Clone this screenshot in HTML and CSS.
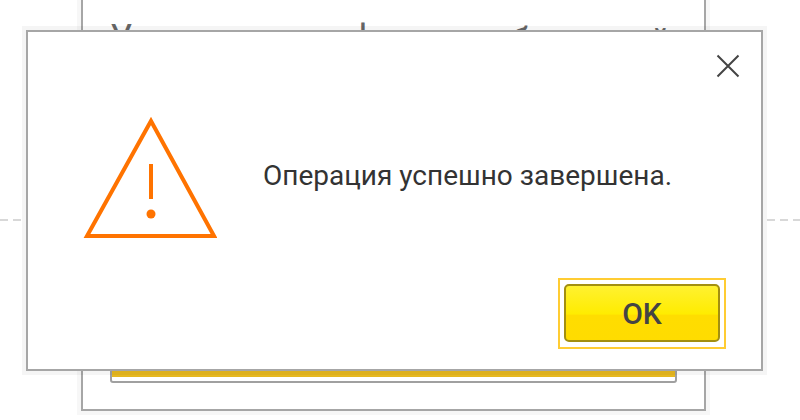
FILE: index.html
```
<!DOCTYPE html>
<html lang="ru">
<head>
    <meta charset="UTF-8">
    <meta name="viewport" content="width=device-width, initial-scale=1.0">
    <title>Сообщение</title>
    <link rel="stylesheet" href="styles.css">
</head>
<body>
    <div class="desktop">
        <div class="guide"></div>

        <div class="window">
            <div class="window-title" aria-hidden="true">
                <span>У</span>
                <span>ф</span>
                <span class="low">б</span>
                <span class="low">й</span>
            </div>
            <div class="window-field"></div>
        </div>

        <div class="dialog" role="alertdialog" aria-labelledby="message">
            <div class="dialog-top">
                <button type="button" class="close" aria-label="Закрыть">
                    <svg width="24" height="24" viewBox="0 0 24 24">
                        <path d="M1.5 1.5 22.5 22.5M22.5 1.5 1.5 22.5" fill="none" stroke="#444" stroke-width="2"/>
                    </svg>
                </button>
            </div>
            <div class="dialog-body">
                <svg class="warning" width="134" height="124" viewBox="0 0 134 124">
                    <path d="M68 5 131 120H4Z" fill="none" stroke="#ff7300" stroke-width="4"/>
                    <path d="M68 48V83" stroke="#ff7300" stroke-width="4"/>
                    <circle cx="68" cy="98" r="4.500" fill="#ff7300"/>
                </svg>
                <p id="message" class="message">Операция успешно завершена.</p>
            </div>
            <div class="dialog-actions">
                <div class="focus-ring">
                    <button type="button" class="ok">OK</button>
                </div>
            </div>
        </div>
    </div>
</body>
</html>
```
FILE: styles.css
```
* {
    box-sizing: border-box;
}
body {
    margin: 0;
    background-color: #fff;
    font-family: Roboto, "Liberation Sans", Arial, sans-serif;
    color: #333;
}
.desktop {
    position: relative;
    min-height: 100vh;
    padding: 30px 37px 48px 26px;
    overflow: hidden;
}
/* dashed line running behind the windows */
.guide {
    position: absolute;
    top: 219px;
    left: 0;
    right: 0;
    height: 2px;
    background: repeating-linear-gradient(90deg, #d8d8d8 0 8px, #fff 8px 13px);
}
.window {
    position: absolute;
    top: -10px;
    bottom: 9px;
    left: 81px;
    right: 94px;
    display: flex;
    flex-direction: column;
    justify-content: space-between;
    padding: 26px 27px;
    border: 2px solid #a6a6a6;
    background-color: #fff;
    box-shadow: 0 0 0 4px rgba(0, 0, 0, 0.03);
}
/* the dialog covers all but the tops of these letters */
.window-title {
    display: grid;
    grid-template-columns: 240fr 160fr 140fr 27fr;
    font-size: 36px;
    line-height: 40px;
    color: #666;
}
.window-title .low {
    padding-top: 4px;
}
.window-field {
    height: 40px;
    border: 2px solid #a0a0a0;
    border-radius: 3px;
    background: linear-gradient(to top, #fff 4px, #e6b820 4px);
}
.dialog {
    position: relative;
    display: flex;
    flex-direction: column;
    border: 2px solid #a6a6a6;
    background-color: #fff;
    box-shadow: 0 0 0 4px rgba(0, 0, 0, 0.04);
}
.dialog-top {
    display: flex;
    justify-content: flex-end;
    padding: 22px 21px 0;
}
.close {
    padding: 0;
    border: 0;
    background: none;
    line-height: 0;
    cursor: pointer;
}
.dialog-body {
    display: flex;
    align-items: center;
    gap: 46px;
    padding: 38px 55px;
}
.warning {
    flex-shrink: 0;
}
.message {
    margin: 0 0 4px;
    font-size: 28px;
    line-height: 36px;
}
.dialog-actions {
    display: flex;
    justify-content: flex-end;
    padding: 0 35px 20px;
}
.focus-ring {
    padding: 4px 4px 5px;
    border: 2px solid #fc3;
}
.ok {
    display: block;
    width: 156px;
    height: 58px;
    border: 2px solid #a38f10;
    border-radius: 5px;
    background: linear-gradient(#fff130, #ffec00 52%, #fd0 54%, #ffdc00);
    font-family: inherit;
    font-size: 30px;
    font-weight: 500;
    color: #444;
    cursor: pointer;
}
```
